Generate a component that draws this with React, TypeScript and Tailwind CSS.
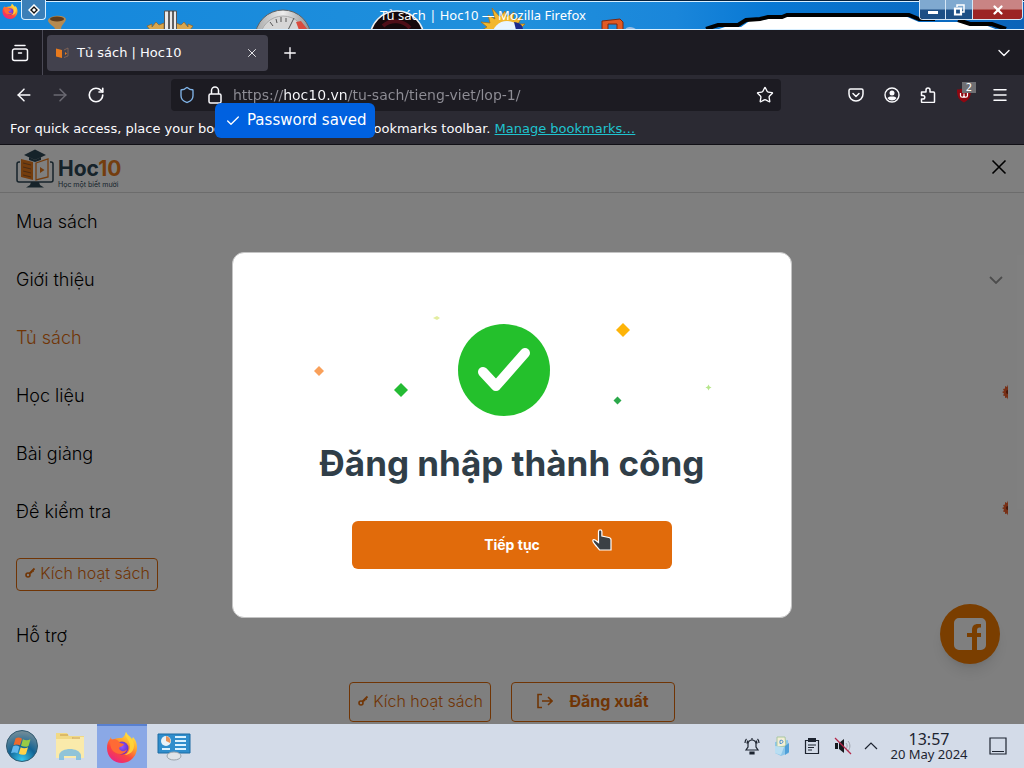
import React from "react";
import {
  ArrowLeft,
  ArrowRight,
  Check,
  ChevronDown,
  Menu,
  Plus,
  RotateCw,
  Shield,
  Star,
  X,
} from "lucide-react";

const iconButton = "flex size-6 shrink-0 items-center justify-center";

function FirefoxLogo({ className, id }: { className: string; id: string }) {
  return (
    <svg viewBox="0 0 32 32" className={className} aria-hidden="true">
      <defs>
        <linearGradient id={`${id}-body`} x1="0.8" y1="0" x2="0.2" y2="1">
          <stop offset="0" stopColor="#fff04a" />
          <stop offset="0.35" stopColor="#ffa22b" />
          <stop offset="0.65" stopColor="#fb4540" />
          <stop offset="1" stopColor="#e6208c" />
        </linearGradient>
        <radialGradient id={`${id}-core`} cx="0.5" cy="0.4" r="0.6">
          <stop offset="0" stopColor="#9059ff" />
          <stop offset="1" stopColor="#6329c0" />
        </radialGradient>
      </defs>
      <path
        d="M20 1c1 3 4 4 6 7l1-2c4 4 5 11 3 16-2 6-8 10-14 10C8 32 1 26 1 17c0-4 1-7 3-9l1-2c0 2 1 3 2 3 2-2 6-2 9-2 2-1 3-3 4-6z"
        fill={`url(#${id}-body)`}
      />
      <circle cx="16" cy="17" r="6.5" fill={`url(#${id}-core)`} />
      <path
        d="M4 9c5-2 8 0 10 3l4 1c-1 3-4 2-5 4 1 4 6 4 8 1-1 5-7 6-11 4-5-2-6-7-6-13z"
        fill="#ff6a35"
      />
      <path d="M20 1c-2 5 4 8 4 14 0 4-2 8-6 9 8 0 12-7 9-14C25 7 21 5 20 1z" fill="#ffd83b" opacity="0.85" />
    </svg>
  );
}

function Wallpaper() {
  return (
    <svg
      viewBox="0 0 1024 30"
      preserveAspectRatio="xMinYMin slice"
      className="absolute inset-0 h-full w-full"
      aria-hidden="true"
    >
      <defs>
        <linearGradient id="sky" x1="0" x2="1">
          <stop offset="0" stopColor="#1487dc" />
          <stop offset="0.5" stopColor="#2090dc" />
          <stop offset="0.66" stopColor="#1a86da" />
          <stop offset="0.75" stopColor="#0878d4" />
          <stop offset="1" stopColor="#0b63b8" />
        </linearGradient>
        <linearGradient id="dial" x1="0" x2="1">
          <stop offset="0" stopColor="#a8a8a8" />
          <stop offset="0.5" stopColor="#ededed" />
          <stop offset="1" stopColor="#8b8b8b" />
        </linearGradient>
      </defs>
      <rect width="1024" height="30" fill="url(#sky)" />
      <path d="M48 20c2-5 16-6 18-1-1 5-5 5-5 11h-6c1-4-7-5-7-10z" fill="#b58a50" />
      <ellipse cx="57" cy="19" rx="7" ry="2.5" fill="#5c3b1c" />
      <path
        d="M147 26l5-2 0 3 4-5 3 3 5-2v7h-14zM193 26l-5-2 0 3-4-5-3 3-5-2v7h14z"
        fill="#d9a64c"
        stroke="#8a6228"
        strokeWidth="0.7"
      />
      <path d="M164.500 11h12v19h-12z" fill="#e9e9e9" stroke="#555" />
      <path d="M169 11v19M173 11v19" stroke="#333" strokeWidth="1.5" />
      <circle cx="283" cy="38" r="28" fill="url(#dial)" stroke="#626262" />
      <circle cx="283" cy="39" r="23" fill="#d6d6d6" stroke="#aaa" />
      <path d="M284 38l10-20M270 22l3 4M281 17v5M276 19l1 4M286 18v4" stroke="#555" />
      <path d="M296 22l5-1 7 9h-9z" fill="#d94a3c" />
      <circle cx="397" cy="38" r="27" fill="#15090c" stroke="#efefef" strokeWidth="1.500" />
      <path d="M383 26c8-7 20-6 27 2" stroke="#4e0e18" strokeWidth="4" fill="none" />
      <path
        d="M482 30l5-3-6-5 9 1-2-8 7 4-3-11 8 9 5-6 2 6 7-5-1 8 9-3-4 7 7 0-6 6 4 2z"
        fill="#f2b72c"
        stroke="#a76b13"
        strokeWidth="0.7"
      />
      <circle cx="507" cy="36" r="15" fill="#e9f5ff" />
      <path d="M514 22c8 1 9 5 9 8h-7z" fill="#1b2a8c" />
      <path d="M602 30V21l18-2 3 3v8h-6v-6h-9v6z" fill="#e05a24" stroke="#7a2710" />
      <path d="M625 30c1-4 8-4 12 0z" fill="#9bbce0" />
      <path d="M716 30l9-3h16l10-7h12l18-4h124l14 6h40l10 3h16l13 5z" fill="#fff" />
      <path
        d="M706 29l12-4h20l8-5 14-1 8-2h14l5-2h122l10 4h16M958 20l12 4h22l14 5"
        fill="none"
        stroke="#000"
        strokeWidth="4"
      />
      <path d="M0 0.500h1024" stroke="#06213d" />
      <path d="M0 1.500h1024M0 29.500h1024" stroke="#d8efff" />
    </svg>
  );
}

function TitleBar() {
  return (
    <header className="relative flex h-[30px] shrink-0 justify-between overflow-hidden bg-[#1487dc]">
      <Wallpaper />
      <div className="relative flex items-start pl-0.5">
        <FirefoxLogo id="title" className="mt-[3px] size-4" />
        <button
          aria-label="Window options"
          className="ml-[3px] flex h-5 w-[25px] items-center justify-center rounded-b border border-t-0 border-[#d5eeff] bg-[#3b7fb8]"
        >
          <svg viewBox="0 0 12 12" className="size-3">
            <path d="M6 1l5 5-5 5-5-5z" fill="#111" stroke="#fff" strokeWidth="1.500" />
            <path d="M6 4l2 2-2 2-2-2z" fill="#fff" />
          </svg>
        </button>
      </div>
      <p className="absolute inset-x-0 top-[5px] pr-[58px] text-center font-['Noto_Sans',sans-serif] text-[13px] leading-5 text-white">
        Tủ sách | Hoc10 — Mozilla Firefox
      </p>
      <div className="relative mr-px flex h-5 overflow-hidden rounded-b border border-t-0 border-[#d5e6f5] text-white">
        <button
          aria-label="Minimize"
          className="flex w-[26px] items-center justify-center border-r border-[#d5e6f5] bg-linear-to-b from-[#7fa9d0] from-45% to-[#1c4f85] to-55%"
        >
          <svg viewBox="0 0 12 12" className="size-3">
            <path d="M1 7h10v3H1z" fill="#fff" />
          </svg>
        </button>
        <button
          aria-label="Restore"
          className="flex w-[27px] items-center justify-center border-r border-[#d5e6f5] bg-linear-to-b from-[#7fa9d0] from-45% to-[#1c4f85] to-55%"
        >
          <svg viewBox="0 0 12 12" className="size-3" fill="none" stroke="#fff">
            <path d="M4 3V1h7v7H9" strokeWidth="1.500" />
            <path d="M2 4.500h6v6H2z" strokeWidth="2.200" />
          </svg>
        </button>
        <button
          aria-label="Close window"
          className="flex w-[49px] items-center justify-center bg-linear-to-b from-[#c98484] from-45% to-[#9c2424] to-55%"
        >
          <X className="size-3.5" strokeWidth={4} />
        </button>
      </div>
    </header>
  );
}

function TabStrip() {
  return (
    <div className="flex h-[45px] shrink-0 items-center bg-[#1c1b22] text-[#fbfbfe]">
      <button
        aria-label="View recent browsing"
        className="flex h-full w-[43px] items-center justify-center border-r border-[#4a4955] pr-0.5"
      >
        <svg
          viewBox="0 0 18 18"
          className="size-[18px]"
          fill="none"
          stroke="currentColor"
          strokeWidth="1.500"
          strokeLinecap="round"
        >
          <path d="M4 1.500h10M3.500 5h11a2 2 0 0 1 2 2v7.500a2 2 0 0 1-2 2h-11a2 2 0 0 1-2-2V7a2 2 0 0 1 2-2zM7.500 9h3" />
        </svg>
      </button>
      <div className="ml-1 flex h-9 w-[221px] items-center rounded bg-[#42414d] pr-2 pl-[9px]">
        <svg viewBox="0 0 14 12" className="h-3 w-3.5">
          <path d="M0 1.500l6 1.500v8L0 9.500z" fill="#e87a1d" />
          <path d="M8 3l4-2v8l-4 1.500" fill="none" stroke="#8a6a58" strokeWidth="0.800" />
          <path d="M9 5v3l2-1.500z" fill="#e87a1d" />
        </svg>
        <span className="ml-[7px] grow font-['DejaVu_Sans',sans-serif] text-[13px]">Tủ sách | Hoc10</span>
        <button aria-label="Close tab" className="flex size-4 items-center justify-center">
          <X className="size-3.5" strokeWidth={1.5} />
        </button>
      </div>
      <button aria-label="New tab" className="ml-2.5 flex size-6 items-center justify-center">
        <Plus className="size-[18px]" strokeWidth={1.8} />
      </button>
      <button aria-label="List all tabs" className="mr-2 ml-auto flex size-6 items-center justify-center">
        <ChevronDown className="size-5" strokeWidth={1.6} />
      </button>
    </div>
  );
}

function NavBar() {
  return (
    <div className="flex h-10 shrink-0 items-center bg-[#2b2a33] px-3 text-[#fbfbfe]">
      <div className="flex gap-3">
        <button aria-label="Back" className={iconButton}>
          <ArrowLeft className="size-5" strokeWidth={1.8} />
        </button>
        <button aria-label="Forward" className={`${iconButton} text-[#6b6a73]`} disabled>
          <ArrowRight className="size-5" strokeWidth={1.8} />
        </button>
        <button aria-label="Reload" className={iconButton}>
          <RotateCw className="size-[18px]" strokeWidth={2.2} />
        </button>
      </div>
      <div className="mr-[63px] ml-[63px] flex h-8 min-w-0 grow items-center rounded bg-[#1c1b22] pr-1 pl-[7px]">
        <Shield className="size-[18px] shrink-0 text-[#80b4e8]" strokeWidth={1.8} />
        <svg
          viewBox="0 0 14 18"
          className="ml-3 h-[18px] w-3.5 shrink-0"
          fill="none"
          stroke="currentColor"
          strokeWidth="1.500"
        >
          <rect x="1" y="8" width="12" height="9" rx="1.500" />
          <path d="M3.500 8V4.500a3.500 3.500 0 0 1 7 0V8" />
        </svg>
        <input
          type="text"
          aria-label="Address"
          defaultValue="https://hoc10.vn/tu-sach/tieng-viet/lop-1/"
          className="ml-[11px] h-full min-w-0 grow bg-[linear-gradient(to_right,#8f8e96_50px,#fbfbfe_50px,#fbfbfe_115px,#8f8e96_115px)] bg-clip-text font-['DejaVu_Sans',sans-serif] text-sm text-transparent"
        />
        <button aria-label="Bookmark this page" className={iconButton}>
          <Star className="size-[18px]" strokeWidth={1.8} />
        </button>
      </div>
      <div className="flex gap-3">
        <button aria-label="Save to Pocket" className={iconButton}>
          <svg
            viewBox="0 0 16 16"
            className="size-4"
            fill="none"
            stroke="currentColor"
            strokeWidth="1.500"
            strokeLinecap="round"
            strokeLinejoin="round"
          >
            <path d="M2.500 2h11a1.500 1.500 0 0 1 1.500 1.500V7A7 7 0 0 1 1 7V3.500A1.500 1.500 0 0 1 2.500 2zM5 6.500l3 3 3-3" />
          </svg>
        </button>
        <button aria-label="Account" className={iconButton}>
          <svg viewBox="0 0 16 16" className="size-4">
            <circle cx="8" cy="8" r="7" fill="none" stroke="currentColor" strokeWidth="1.400" />
            <circle cx="8" cy="6" r="2.500" fill="currentColor" />
            <path
              d="M3.500 11.200C4.500 9.600 6 9.400 8 9.400s3.500.2 4.500 1.800A5.600 5.600 0 0 1 8 13.500a5.600 5.600 0 0 1-4.500-2.300z"
              fill="currentColor"
            />
          </svg>
        </button>
        <button aria-label="Extensions" className={iconButton}>
          <svg
            viewBox="0 0 16 16"
            className="size-4"
            fill="none"
            stroke="currentColor"
            strokeWidth="1.500"
            strokeLinejoin="round"
          >
            <path d="M2 5h4V3a2 2 0 0 1 4 0v2h3.500a1 1 0 0 1 1 1v8.500a1 1 0 0 1-1 1H2.500a1 1 0 0 1-1-1V12H3a1.800 1.800 0 0 0 0-3.600H1.500V5z" />
          </svg>
        </button>
        <button aria-label="uBlock Origin, 2 blocked" className={`${iconButton} relative`}>
          <svg viewBox="0 0 16 16" className="size-4">
            <path d="M8 0.500c2 1.500 4 2 7 2 0 6-1 10-7 13-6-3-7-7-7-13 3 0 5-.5 7-2z" fill="#8f0711" />
            <path
              d="M4.500 6v2.500a1.700 1.700 0 0 0 3.500 0V6.500v2a1.700 1.700 0 0 0 3.500 0V6"
              fill="none"
              stroke="#fff"
              strokeWidth="1.200"
            />
          </svg>
          <span className="absolute -top-px left-2.5 w-3.5 bg-[#6f6f73] text-center font-['DejaVu_Sans',sans-serif] text-[10px] leading-[11px] text-white">
            2
          </span>
        </button>
        <button aria-label="Open application menu" className={iconButton}>
          <Menu className="size-[18px]" strokeWidth={2} />
        </button>
      </div>
    </div>
  );
}

function BookmarksBar() {
  return (
    <div className="relative flex h-[30px] shrink-0 items-center border-b border-[#111016] bg-[#2b2a33] px-2.5 pb-0.5 font-['DejaVu_Sans',sans-serif] text-[13px] text-[#fbfbfe]">
      <p className="whitespace-nowrap">
        For quick access, place your bookmarks here{" "}
        <span className="ml-3">
          on the bookmarks toolbar.{" "}
          <a href="#manage" className="text-[#1fc3cf] underline">
            Manage bookmarks…
          </a>
        </span>
      </p>
      <div
        role="status"
        className="absolute -top-3 left-[215px] z-20 flex h-[35px] w-40 items-center gap-1.5 rounded-md bg-[#0061e0] pl-2.5 text-[15px] whitespace-nowrap text-white"
      >
        <Check className="size-4 shrink-0" strokeWidth={2} />
        Password saved
      </div>
    </div>
  );
}

function Hoc10Logo() {
  return (
    <a href="#home" aria-label="Hoc10" className="flex items-center gap-1">
      <svg viewBox="0 0 38 40" className="h-10 w-[38px]">
        <path
          d="M4 13H3a2 2 0 0 0-2 2v16a2 2 0 0 0 2 2h32a2 2 0 0 0 2-2V15a2 2 0 0 0-2-2h-1"
          fill="none"
          stroke="#2d4654"
          strokeWidth="1.500"
        />
        <path d="M15 33h8l1 3 4 2.500H10l4-2.500z" fill="#2d4654" />
        <path d="M5 10l12 3v18L5 28z" fill="#e87a1d" />
        <path d="M7 14l8 2M7 18l8 2M7 22l8 2M7 26l8 2" stroke="#5a4030" opacity="0.600" />
        <path d="M20 14l12-4v18l-12 3z" fill="none" stroke="#e87a1d" strokeWidth="1.300" />
        <path d="M24 18v6l4.500-3z" fill="#e87a1d" />
        <path d="M8 6l11-5.500L30 6l-11 5z" fill="#2d4654" />
        <path d="M13 8v3l6 2 6-2V8l-6 3z" fill="#2d4654" />
      </svg>
      <span className="flex flex-col pt-2">
        <span className="text-[21px] leading-6 font-bold text-[#2d4654]">
          Hoc<span className="text-[#e87a1d]">10</span>
        </span>
        <span className="text-[7px] leading-2 text-[#2d4654]">Học một biết mười</span>
      </span>
    </a>
  );
}

function KeyIcon() {
  return (
    <svg viewBox="0 0 12 12" className="size-3 shrink-0" fill="none" stroke="currentColor">
      <circle cx="4" cy="8" r="2" strokeWidth="1.600" />
      <path d="M5.500 6.500L10.500 1.500" strokeWidth="1.800" />
      <path d="M8.500 3.500l1.200 1.200M7 5l1.200 1.200" strokeWidth="1.200" />
    </svg>
  );
}

const menu = [
  { label: "Mua sách" },
  { label: "Giới thiệu", expandable: true },
  { label: "Tủ sách", active: true },
  { label: "Học liệu", hot: true },
  { label: "Bài giảng" },
  { label: "Đề kiểm tra", hot: true },
];

function SiteMenu() {
  return (
    <div className="flex grow flex-col overflow-hidden bg-white font-['Inter',sans-serif]">
      <div className="flex h-12 shrink-0 items-center justify-between border-b border-[#d8d8d8] px-4">
        <Hoc10Logo />
        <button aria-label="Close menu" className="mb-1 flex size-[18px] items-center justify-center text-black">
          <svg viewBox="0 0 18 18" className="size-[18px]" fill="none" stroke="currentColor" strokeWidth="1.600">
            <path d="M2.500 2.500l13 13M15.500 2.500l-13 13" />
          </svg>
        </button>
      </div>
      <nav className="flex flex-col text-lg font-light text-black">
        {menu.map((item) => (
          <a
            key={item.label}
            href="#menu"
            className={`flex h-[58px] items-center justify-between px-4 pb-px ${item.active ? "text-[#e16b0b]" : ""}`}
          >
            {item.label}
            {item.expandable && (
              <svg viewBox="0 0 14 8" className="mr-[5px] h-2 w-3.5" fill="none" stroke="#999" strokeWidth="1.800">
                <path d="M1 1l6 6 6-6" />
              </svg>
            )}
            {item.hot && (
              <svg viewBox="0 0 6 16" className="mb-2 h-4 w-1.5">
                <path d="M6 0.500L5 3 3 2v2.500L1 5l1 2L0 8l2 1.500L1 11.500l2 .5v2l2-.5 1 2z" fill="#f0602c" />
                <path d="M6 6a2 2 0 0 0 0 4" fill="#8a2a10" />
              </svg>
            )}
          </a>
        ))}
        <div className="flex h-[66px] items-center pl-4">
          <button className="flex h-[33px] w-[142px] items-center justify-center gap-1 rounded border border-[#e16b0b] pb-0.5 text-base text-[#e16b0b]">
            <KeyIcon />
            Kích hoạt sách
          </button>
        </div>
        <a href="#support" className="flex h-[58px] items-center pb-px pl-4">
          Hỗ trợ
        </a>
      </nav>
      <div className="mt-[17px] mb-0.5 flex justify-center gap-5 text-base text-[#e16b0b]">
        <button className="flex h-10 w-[142px] items-center justify-center gap-1 rounded border border-[#e16b0b] pb-0.5 font-light">
          <KeyIcon />
          Kích hoạt sách
        </button>
        <button className="flex h-10 w-[164px] items-center justify-center gap-4 rounded border border-[#e16b0b] pb-0.5 font-bold">
          <svg viewBox="0 0 16 16" className="size-4" fill="none" stroke="currentColor" strokeWidth="1.600">
            <path d="M5 1.500H1v13h4M5 8h10M11 4l4 4-4 4" />
          </svg>
          Đăng xuất
        </button>
      </div>
    </div>
  );
}

function SuccessDialog() {
  return (
    <div className="absolute inset-0 z-10 flex items-center justify-center bg-black/50 font-['Inter',sans-serif]">
      <section
        role="dialog"
        aria-modal="true"
        aria-labelledby="login-title"
        className="flex w-[560px] flex-col items-center rounded-xl border border-[#c4c4c4] bg-white pt-[59px] pb-12"
      >
        <svg viewBox="0 0 400 108" className="h-[108px] w-[400px]" aria-hidden="true">
          <circle cx="192" cy="58" r="46" fill="#24c02c" />
          <path
            d="M171 60l13 14 29-33"
            fill="none"
            stroke="#fff"
            strokeWidth="10"
            strokeLinecap="round"
            strokeLinejoin="round"
          />
          <path d="M7 54l5 5-5 5-5-5z" fill="#f9a05a" />
          <path d="M89 71l7 7-7 7-7-7z" fill="#24bb34" />
          <path d="M125 4l3 2-3 2-4-2z" fill="#e3eda0" />
          <path d="M311 11l7 7-7 7-7-7z" fill="#fdb409" />
          <path d="M305.500 84.500l4 4-4 4-4-4z" fill="#2ba84a" />
          <path d="M396.500 72.500l1 2 2 1-2 1-1 2-1-2-2-1 2-1z" fill="#b5e58a" />
        </svg>
        <h1 id="login-title" className="mt-4 text-[35px] leading-[54px] font-bold text-[#303e48]">
          Đăng nhập thành công
        </h1>
        <button className="relative mt-[31px] h-12 w-80 rounded-md bg-[#e16b0b] text-sm font-bold text-white">
          Tiếp tục
          <svg viewBox="0 0 20 22" className="absolute top-2 right-[60px] h-[22px] w-5" aria-hidden="true">
            <path
              d="M6.500 2.500a1.700 1.700 0 0 1 3.400 0V7l7 1.500c1.600.4 2.300 1 2.100 2.500V21H7.500L5 18C3.500 16 .8 13.500.8 11.800c0-1.400 1.600-1.500 2.700-.5l3 2.200z"
              fill="#3b4045"
              stroke="#fff"
              strokeWidth="1.200"
            />
          </svg>
        </button>
      </section>
    </div>
  );
}

function FacebookButton() {
  return (
    <button
      aria-label="Facebook"
      className="absolute right-6 bottom-[60px] flex size-[60px] items-center justify-center rounded-full bg-[#f57c00] shadow-lg"
    >
      <svg viewBox="0 0 32 32" className="size-8">
        <path
          d="M5 0h22a5 5 0 0 1 5 5v22a5 5 0 0 1-5 5h-4V19h4v-4h-4v-2.500c0-2 .8-3 2.500-3H27V6h-3c-4 0-6 2-6 6v3h-5v4h5v13H5a5 5 0 0 1-5-5V5a5 5 0 0 1 5-5z"
          fill="#fff"
        />
      </svg>
    </button>
  );
}

function Taskbar() {
  return (
    <footer className="flex h-11 shrink-0 items-center bg-[#d3dbe8] font-['Noto_Sans',sans-serif] text-[#1d2430]">
      <button aria-label="Start" className="ml-1.5 flex size-8 items-center justify-center">
        <svg viewBox="0 0 32 32" className="size-8">
          <defs>
            <radialGradient id="orb" cx="0.5" cy="0.95" r="0.9">
              <stop offset="0" stopColor="#35c8ef" />
              <stop offset="0.5" stopColor="#126394" />
              <stop offset="1" stopColor="#6f8b98" />
            </radialGradient>
          </defs>
          <circle cx="16" cy="16" r="15.500" fill="url(#orb)" stroke="#315a70" />
          <path d="M9.500 8.500c2-1.500 4.500-1 6.500.2l-2 6.600c-2-1-4.500-1.200-6.500 0z" fill="#ee6a2c" />
          <path d="M17 9.200c2 1.300 5 1.500 7.500 0l-2 6.700c-2 1.300-5.200 1-7.500-.2z" fill="#98cb45" />
          <path d="M7 16.500c2-1.500 4.500-1 6.500.2l-2 6.600c-2-1.200-4.500-1.200-6.500 0z" fill="#63b7ec" />
          <path d="M14.700 17.200c2 1.300 5 1.500 7.300 0l-2 6.700c-2 1.300-5 1-7.200-.2z" fill="#ffd34a" />
        </svg>
      </button>
      <button aria-label="Files" className="ml-4 flex w-8 items-center justify-center">
        <svg viewBox="0 0 32 32" className="size-8">
          <path d="M2 3h11l2 3h15v22H2z" fill="#f1d985" />
          <path d="M2 9h16l2-2h10v21H2z" fill="#faeaab" />
          <path d="M6 5h8M18 8h8" stroke="#c69a4a" />
          <path d="M5 30v-5c2-8 20-8 22 0v5h-5v-4H10v4z" fill="#7cbddf" opacity="0.850" />
        </svg>
      </button>
      <button
        aria-label="Firefox"
        className="ml-[11px] flex h-full w-[50px] items-center justify-center border-t-2 border-[#5980cf] bg-[#8aa8e6]"
      >
        <FirefoxLogo id="task" className="size-8" />
      </button>
      <button aria-label="System information" className="ml-2.5 flex size-[34px] items-center justify-center">
        <svg viewBox="0 0 34 30" className="h-[30px] w-[34px]">
          <path d="M1 3h32v19H1z" fill="#2f8dcc" stroke="#1c6aa2" />
          <circle cx="9" cy="10" r="5" fill="#e8f2f8" />
          <path d="M9 10V5a5 5 0 0 1 4 7z" fill="#e8935a" />
          <path d="M18 6h11M18 10h11M18 14h11M18 18h11M5 18h8" stroke="#d9f1ff" strokeWidth="1.800" />
          <ellipse cx="17" cy="25" rx="7" ry="4" fill="#dfe4e8" stroke="#9aa4ad" />
        </svg>
      </button>
      <div className="ml-auto flex items-center gap-3.5">
        <svg viewBox="0 0 16 18" className="h-[18px] w-4" fill="none" stroke="currentColor" strokeWidth="1.200">
          <path d="M2 13h12l-2-3V7a4 4 0 0 0-8 0v3zM8 3V1M1 6c0-2 .5-3 1.500-4M15 6c0-2-.5-3-1.500-4M3 6.500c0-1 .2-2 1-3M13 6.500c0-1-.2-2-1-3" />
          <path d="M6 15h4v2H6z" fill="currentColor" />
        </svg>
        <svg viewBox="0 0 16 20" className="h-5 w-4">
          <path d="M1 6l13-2 1 13-8 3-6-3z" fill="#8cc6ea" />
          <path d="M3 1h8l1 9-9 1z" fill="#f4efd5" stroke="#a8c7a0" />
          <path d="M6 4.500c4-1.500 4 3.500 0 3z" stroke="#4b8fd0" fill="none" />
          <path d="M1 10l9 1-3 8-6-2z" fill="#b9def2" />
          <path d="M11 10l4-3v9l-4 3z" fill="#4f9fd8" />
        </svg>
        <svg viewBox="0 0 16 16" className="size-4">
          <path d="M1.500 2.500h13v13h-13z" fill="none" stroke="currentColor" strokeWidth="1.200" />
          <path d="M4 0h8v4H4z" fill="currentColor" />
          <path d="M4 7h8M4 9.500h6M4 12h4" stroke="currentColor" />
        </svg>
        <svg viewBox="0 0 18 18" className="size-[18px]">
          <path d="M1 6h3v6H1zM5 6l5-4v14l-5-4z" fill="#15181d" />
          <path d="M12 6c1.500 2 1.500 4 0 6M14 4c2.500 3 2.500 7 0 10" fill="none" stroke="#9aa0aa" />
          <path d="M1 1l16 16" stroke="#b3284a" strokeWidth="1.200" />
        </svg>
        <svg viewBox="0 0 14 14" className="-ml-0.5 size-3.5" fill="none" stroke="currentColor" strokeWidth="1.200">
          <path d="M1 10l6-6 6 6" />
        </svg>
      </div>
      <div className="ml-3 flex w-[78px] flex-col items-center whitespace-nowrap">
        <span className="text-base leading-4">13:57</span>
        <span className="text-[13px] leading-[14px]">20 May 2024</span>
      </div>
      <button aria-label="Show desktop" className="mr-[17px] ml-[21px]">
        <svg viewBox="0 0 18 18" className="size-[18px]" fill="none" stroke="currentColor" strokeWidth="1.200">
          <path d="M1 1h16v16H1zM3 14.500h12" />
        </svg>
      </button>
    </footer>
  );
}

export default function App() {
  return (
    <div className="flex min-h-screen flex-col overflow-hidden bg-[#808080]">
      <TitleBar />
      <TabStrip />
      <NavBar />
      <BookmarksBar />
      <main className="relative flex grow flex-col">
        <SiteMenu />
        <FacebookButton />
        <SuccessDialog />
      </main>
      <Taskbar />
    </div>
  );
}
